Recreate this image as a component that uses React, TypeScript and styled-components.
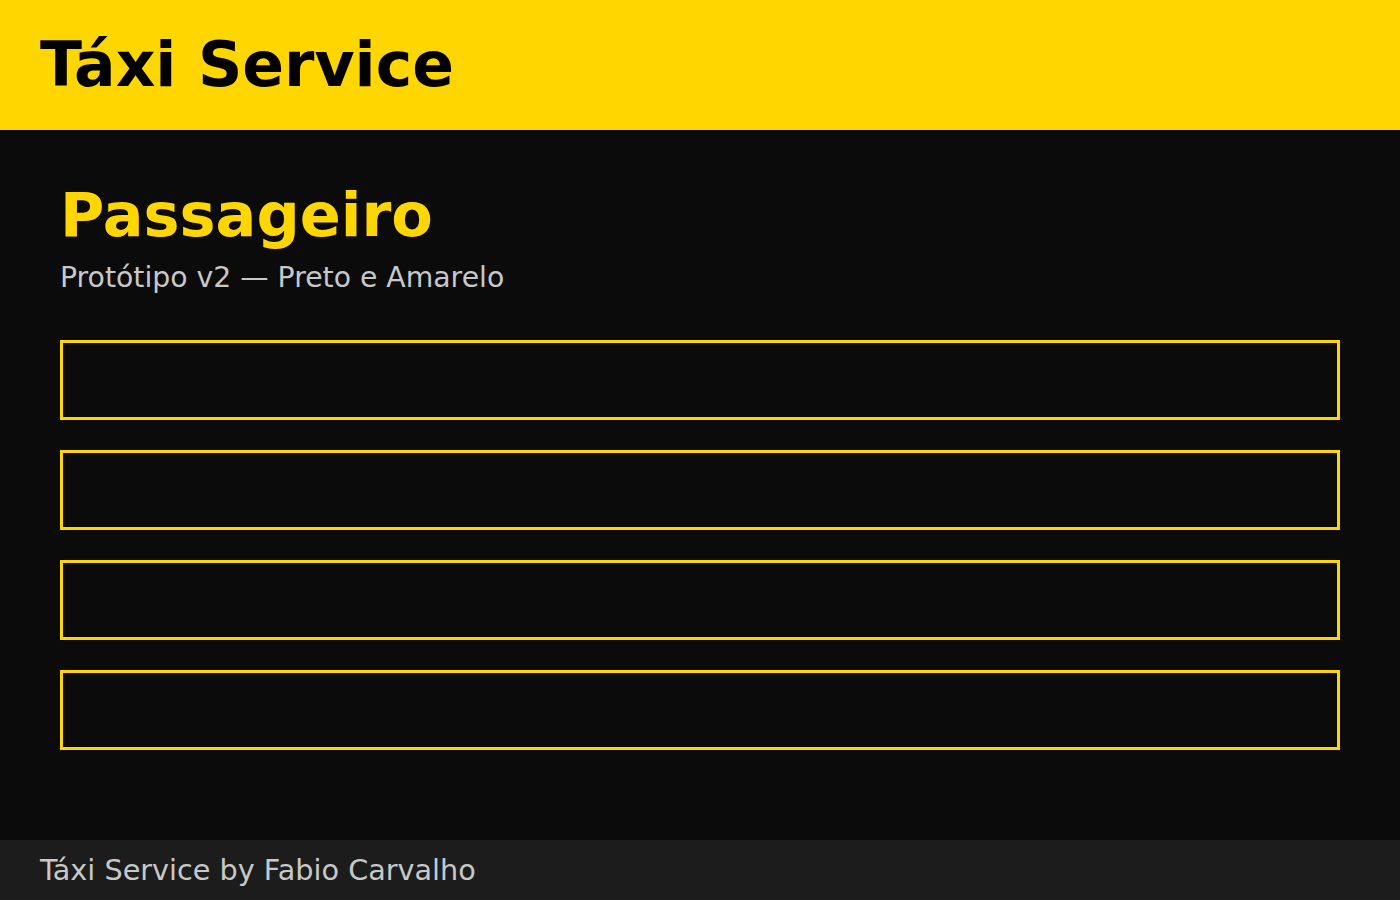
import React from "react";
import styled, { createGlobalStyle } from "styled-components";

const GlobalStyle = createGlobalStyle`
  html, body { margin: 0; padding: 0; background: #0b0b0b; }
  body { font-family: "DejaVu Sans", "Liberation Sans", sans-serif; }
  * { box-sizing: border-box; }
`;

const Page = styled.div`
  min-height: 100vh;
  display: flex;
  flex-direction: column;
  background: #0b0b0b;
`;

const Header = styled.header`
  height: 130px;
  background: #ffd600;
  display: flex;
  align-items: center;
  padding: 2px 40px 0;
`;

const Brand = styled.h1`
  margin: 0;
  font-size: 61.6px;
  font-weight: 700;
  color: #000;
  line-height: 1.164;
`;

const Main = styled.main`
  flex: 1;
  padding: 50px 60px 40px;
  display: flex;
  flex-direction: column;
`;

const Title = styled.h2`
  margin: 0;
  font-size: 60.5px;
  font-weight: 700;
  color: #ffd600;
  line-height: 1.164;
`;

const Subtitle = styled.p`
  margin: 12px 0 0;
  font-size: 28.3px;
  color: #c8c8c8;
  line-height: 1.164;
`;

const List = styled.div`
  margin-top: 44.5px;
  display: flex;
  flex-direction: column;
  gap: 30px;
`;

const Slot = styled.div`
  height: 80px;
  border: 3px solid #ffd600;
  background: #0b0b0b;
`;

const Footer = styled.footer`
  height: 60px;
  background: #1c1c1c;
  display: flex;
  align-items: center;
  padding: 0 40px;
  font-size: 28.7px;
  color: #c8c8c8;
`;

export default function App() {
  return (
    <>
      <GlobalStyle />
      <Page>
        <Header>
          <Brand>Táxi Service</Brand>
        </Header>
        <Main>
          <Title>Passageiro</Title>
          <Subtitle>Protótipo v2 — Preto e Amarelo</Subtitle>
          <List>
            {[0, 1, 2, 3].map((i) => (
              <Slot key={i} />
            ))}
          </List>
        </Main>
        <Footer>Táxi Service by Fabio Carvalho</Footer>
      </Page>
    </>
  );
}
